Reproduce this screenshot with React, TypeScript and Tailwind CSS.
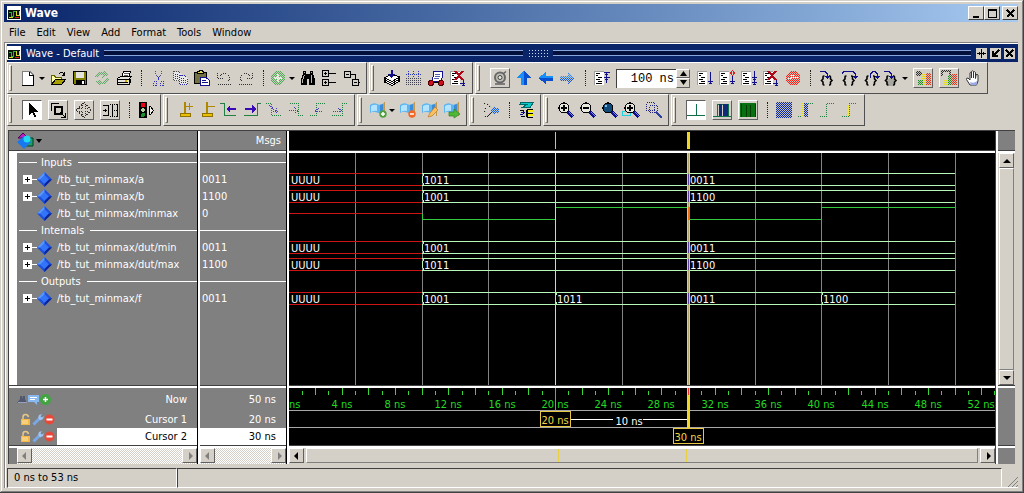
import React from "react";

/* ---------- drawing helpers ---------- */

type PathProps = { d: string; s?: string; f?: string; w?: number; dash?: string };

function P({ d, s = "none", f = "none", w = 1, dash }: PathProps) {
  return <path d={d} stroke={s} fill={f} strokeWidth={w} strokeDasharray={dash} />;
}

function Svg({ children, smooth }: { children: React.ReactNode; smooth?: boolean }) {
  return (
    <svg
      width="16"
      height="16"
      viewBox="0 0 16 16"
      shapeRendering={smooth ? "auto" : "crispEdges"}
      aria-hidden="true"
      className="shrink-0 overflow-visible"
    >
      {children}
    </svg>
  );
}

/* Checker overlay that gives an icon its disabled look. */
const Veil = () => <rect x="-1" y="-1" width="18" height="18" fill="url(#veil)" fillOpacity="0.9" />;

const K = "#000";
const N = "#10108c";

const Lines = () => (
  <>
    <P d="M0 1H10V15H0Z" f="#fff" />
    <P d="M.5 15V1.5H10" s="#a0a0a0" />
    <P d="M2 3.5H6M2 5.5H4M4 7.5H8M2 9.5H6M4 11.5H8M2 13.5H8" s={K} />
  </>
);

const Braces = () => (
  <g shapeRendering="auto">
    <P d="M5.500 6H4.800Q4 6 4 7V9L2.500 10.500L4 12V14Q4 15 4.800 15H5.500M10 6H10.700Q11.500 6 11.500 7V9L13 10.500L11.500 12V14Q11.500 15 10.700 15H10" s={K} w={1.6} />
  </g>
);

const Lens = ({ fill = "#e8e8e0" }: { fill?: string }) => (
  <>
    <circle cx="6" cy="6" r="5" fill={fill} stroke={K} strokeWidth="1.2" />
    <P d="M10 10L15 15" s="#10108c" w={3} />
    <P d="M11 10L15 14" s="#7c8ce0" />
  </>
);

const Flag = () => (
  <>
    <P d="M0 3Q4 0 7 2T14 1V10Q11 12 7 10.500T0 11Z" f="#5cb4f0" />
    <P d="M1 4Q4 2 7 3V9Q4 8 1 10Z" f="#b4e4ff" />
    <P d="M10 3L13 2V9L10 10Z" f="#3c8cd8" />
    <P d="M14.500 0V14" s="#c09850" />
  </>
);

const icons: Record<string, React.ReactNode> = {
  fresh: <Svg><P d="M2.500 1.500H10L13.500 5V15.500H2.500Z" f="#fff" s="#808080" /><P d="M9.500 1.500V5.500H13.500V15.500H2" s={K} /></Svg>,
  open: <Svg><P d="M1.500 13.500V5.500H4.500L5.500 7.500H11.500V9" f="#ffffa0" s="#606000" /><P d="M1.500 14.500L5.500 9.500H15.500L11.500 14.500Z" f="#a8a000" s={K} /><P d="M9 3.500L10.500 2.500H12.500L14.500 5M12 5.500H15M14.500 2V5" s={K} /></Svg>,
  save: <Svg><P d="M1.500 1.500H14.500V14.500H2.500L1.500 13.500Z" f="#808000" s={K} /><P d="M4 2H12V8H4Z" f="#e4e4dc" /><P d="M4 10H13V14H4Z" f={K} /><P d="M10 11H12V14H10Z" f="#fff" /></Svg>,
  reload: <Svg><P d="M1 7Q2 1 9 2L10 0L14 5L8 8L9 5Q5 4 4 8ZM15 9Q14 15 7 14L6 16L2 11L8 9L7 12Q11 12 12 8Z" f="#60ac68" /><Veil /></Svg>,
  print: <Svg><P d="M5.500 7.500L7.500 1.500H14.500L12.500 7.500Z" f="#fff" s={K} /><P d="M8 3.500H13M7.500 5.500H12" s="#606060" /><P d="M1.500 8.500L4.500 6.500H15.500L13.500 8.500V14.500H1.500Z" f="#e4e4dc" s={K} /><P d="M1 9.500H12.500M1 12.500H12" s={K} /><P d="M9 10H11V12H9Z" f="#d0b000" /><P d="M14.500 13V9" s={K} /></Svg>,
  cut: <Svg><P d="M5.500 1V4L9.500 10M11.500 1V4L7.500 10" s="#50508c" dash="1 1" /><P d="M3.500 11.500H6.500V15.500H3.500ZM10.500 11.500H13.500V15.500H10.500Z" s="#3030c0" dash="1 1" /><P d="M8.500 7V10" s="#3030c0" /></Svg>,
  copy: <Svg><P d="M1.500 1.500H6.500L9.500 4.500V10.500H1.500Z" f="#e8e8e8" s="#505050" dash="1 1" /><P d="M7.500 5.500H12.500L15.500 8.500V14.500H7.500Z" f="#e8e8e8" s="#2828b0" dash="1 1" /><P d="M3 4.500H6M3 6.500H6M3 8.500H6M9 8.500H12M9 10.500H14M9 12.500H14" s="#2828b0" dash="1 1" /></Svg>,
  paste: <Svg><P d="M.5 2.500H12.500V13.500H.5Z" f="#707040" s={K} /><P d="M3.500 3.500V1.500H5L5.500 .5H8L8.500 1.500H9.500V3.500Z" f="#e0d860" s={K} /><P d="M6.500 7.500H12L15.500 10.500V15.500H6.500Z" f="#fff" s={N} /><P d="M8 10.500H12M8 12.500H14" s={N} /></Svg>,
  undo: <Svg><P d="M1.500 3V8.500H7M2.500 7.500L6.500 3.500H10.500L13.500 6.500V9.500L10.500 12.500M2 14.500H15" s="#303030" dash="1 1" /></Svg>,
  redo: <Svg><P d="M14.500 3V8.500H9M13.500 7.500L9.500 3.500H5.500L2.500 6.500V9.500L5.500 12.500M1 14.500H14" s="#303030" dash="1 1" /></Svg>,
  add: <Svg><circle cx="8" cy="8" r="7" fill="#54ac58" /><P d="M8 4V12M4 8H12" s="#e8ffe8" w={2} /><Veil /></Svg>,
  find: <Svg><P d="M3 1H6V4H10V1H13V4L15 9V15H9V9H7V15H1V9L3 4Z" f={K} /><P d="M4.500 5L2.500 10V13M11.500 5V13M4 2.500H5M11 2.500H12" s="#b8b8b0" /></Svg>,
  expand: <Svg><P d="M.5 .5H6.500V6.500H.5ZM.5 9.500H6.500V15.500H.5ZM7 3.500H14M7 12.500H14M2 3.500H5M3.500 2V5M2 12.500H5M3.500 11V14" s={K} /></Svg>,
  collapse: <Svg><P d="M.5 1.500H6.500V7.500H.5ZM8.500 9.500H14.500V15.500H8.500ZM7 4.500H11.500V9M2 4.500H5M10 12.500H13M15 12.500H16" s={K} /></Svg>,
  compile: <Svg><P d="M.5 12L8 8L15.500 11L8 15.500Z" f="#fff" s={K} /><P d="M.5 10L8 6L15.500 9L8 13.500Z" f="#fff" s={K} /><P d="M.5 8L8 4L15.500 7L8 11.500Z" f="#fff" s={K} /><P d="M7.500 0V5" s={N} w={2} /><P d="M4 4H11L7.500 8Z" f={N} /></Svg>,
  compileAll: <Svg><P d="M2.500 1V5M7.500 1V5M12.500 1V5M0 4.500H15M1.500 6.500H4M6.500 6.500H9M11.500 6.500H14" s="#2838b8" dash="1 1" /><P d="M0 8.500H16M0 10.500H16M0 12.500H16M0 14.500H16" s="#404050" dash="1 1" /></Svg>,
  simulate: <Svg><P d="M5.500 1.500H14.500L15 4L13 11.500H3.500L5.500 5Z" f="#fff" s={N} /><P d="M7 4.500H12M7 6.500H12M6 8.500H11" s="#5060b0" /><circle cx="3" cy="13" r="2.500" fill="#d01020" stroke="#500" /><circle cx="13" cy="13" r="2.500" fill="#d01020" stroke="#500" /><P d="M5 12.500H11" s={K} /></Svg>,
  breakSim: <Svg><Lines /><P d="M5 1L13 10M13 1L5 10" s="#b00818" w={2} /><P d="M13.500 10V15M10 13.500H15M12 15.500H15" s={N} /></Svg>,
  camera: <Svg smooth><circle cx="8" cy="7.500" r="5" fill="#c0c0b8" stroke="#686868" strokeWidth="2" /><circle cx="8" cy="7.500" r="2" fill="#e8e8e0" stroke="#404040" /><P d="M3 14H13M11.500 3.500L14 1.500" s="#606060" w={1.5} /></Svg>,
  up: <Svg><P d="M8 0L15 8H11V15H5V8H1Z" f="#1890f8" /><P d="M8 0L15 8H11V15H8Z" f="#0850d0" /></Svg>,
  left: <Svg><P d="M0 8L8 2V5.500H15V11H8V14Z" f="#1890f8" /><P d="M0 8H15V11H8V14Z" f="#0850d0" /></Svg>,
  right: <Svg><P d="M15 8L8 2V5.500H0V11H8V14Z" f="#3888f0" /><P d="M15 8H0V11H8V14Z" f="#1c5cd8" /><Veil /></Svg>,
  restart: <Svg><Lines /><P d="M12.500 2V13M10 2.500H15.500M10 7.500H15.500M11 4.500H14M11 9.500H14" s={N} /></Svg>,
  run: <Svg><Lines /><P d="M13.500 2V14M11 11.500H16M12 13.500H15" s={N} /></Svg>,
  runContinue: <Svg><Lines /><P d="M13.500 6V14M11 11.500H16M12 13.500H15" s={N} /><P d="M13.500 .5L15.500 3L13.500 5.500L11.500 3Z" s="#e02020" /></Svg>,
  runAll: <Svg><Lines /><P d="M13.500 1V14M11 7.500H16M12 9.500H15M11 12.500H16M12 14.500H15" s={N} /></Svg>,
  stop: <Svg><P d="M5 1H11L15 5V11L11 15H5L1 11V5Z" f="#ff2018" /><P d="M3 8.500H6V5.500H8V9M10 6V9M10 7.500H13" s="#fff" /><Veil /></Svg>,
  stepInto: <Svg><Braces /><P d="M1 1.500H6L8.500 4V9M6 6.500H11M7 7.500H10M8 8.500H9" s={N} /></Svg>,
  stepOver: <Svg><Braces /><P d="M1 3.500L3 1.500H12L14.500 4V8M12 6.500H17M13 7.500H16M14 8.500H15" s={N} /></Svg>,
  stepOut: <Svg><Braces /><P d="M7.500 8V4L10 1.500H12L14.500 4V8M12 6.500H17M13 7.500H16M14 8.500H15" s={N} /></Svg>,
  stepMore: <Svg><circle cx="8" cy="12" r="4" fill="#a8a8a0" /><Braces /><P d="M1 1.500H6L8.500 4V9M6 6.500H11M7 7.500H10M8 8.500H9" s={N} /></Svg>,
  profile: <Svg><P d="M6 4H11V15H6Z" f="#e8e010" /><P d="M11 3H16V15H11Z" f="#e03820" /><P d="M3 10H8V15H3Z" f="#208c20" /><circle cx="4" cy="3.500" r="3" fill="#303030" /><Veil /></Svg>,
  memory: <Svg><P d="M7 5H11V15H7Z" f="#208c20" /><P d="M11 4H16V15H11Z" f="#e03820" /><P d="M3 10H7V15H3Z" f="#e8e010" /><P d="M1 6V1H9V5" s="#303030" w={2} /><Veil /></Svg>,
  hand: <Svg smooth><P d="M5 15L1.500 9.500Q1 8 3 8L5 10V3Q5.500 1.500 6.500 3V8V1.500Q7.500 0 8.500 1.500V8V2Q9.500 1 10.500 2.500V8.500L11 5Q12 3.500 13 5L13 11L11.500 15Z" f="#fff" s="#333" /><P d="M6 15L5 12Q9 14 12 11L11.500 15Z" f="#98a8e8" /></Svg>,

  pointer: <Svg><P d="M5 1V13L8 10.500L10.500 15H12.500L10 10H14Z" f={K} /></Svg>,
  zoomMode: <Svg><P d="M1.500 9V1.500H9" s={K} /><P d="M5 5H12V12H5Z" s={K} w={2} /><P d="M10 10L15 15M15.500 11V15.500H11" s={K} /></Svg>,
  panMode: <Svg><P d="M8 .5L11 3.500H9.500V6.500H12.500V5L15.500 8L12.500 11V9.500H9.500V12.500H11L8 15.500L5 12.500H6.500V9.500H3.500V11L.5 8L3.500 5V6.500H6.500V3.500H5Z" s="#303030" dash="1 1" /></Svg>,
  editMode: <Svg><P d="M1 3.500H6.500V13.500M1 8.500H5M1 13.500H6M3 7V10M10.500 2V15M15.500 2V15" s={K} /><P d="M8 2.500H16M8 14.500H16M10 8.500H15" s={K} dash="1 1" /></Svg>,
  traffic: <Svg><P d="M1 0H9V16H1Z" f={K} /><circle cx="5" cy="3" r="2.300" fill="#f00010" /><circle cx="5" cy="8" r="1.800" fill="#b0d0a0" /><circle cx="5" cy="13" r="2" fill="#189030" /><P d="M11.500 5V12L12.500 12.500L15.500 8.500L12.500 4.500Z" f="#f4f4ec" s={K} /></Svg>,
  insertCursor: <Svg><P d="M7 0V11" s="#b08800" w={2} /><P d="M8 4.500H15M11.500 1V8" s="#b08800" /><P d="M2.500 11.500H12.500V14.500H2.500Z" f="#e8c000" s="#907000" /></Svg>,
  deleteCursor: <Svg><P d="M7 0V11" s="#b08800" w={2} /><P d="M8 4.500H15" s="#b08800" /><P d="M2.500 11.500H12.500V14.500H2.500Z" f="#e8c000" s="#907000" /></Svg>,
  prevEdge: <Svg><P d="M-2 1.500H2.500V13.500H14" s="#208040" /><P d="M5 7H14" s="#3808b8" w={2} /><P d="M4 7L8 3V11Z" f="#3808b8" /></Svg>,
  nextEdge: <Svg><P d="M0 13.500H13.500V1.500H17" s="#208040" /><P d="M1 7H9" s="#3808b8" w={2} /><P d="M12 7L8 3V11Z" f="#3808b8" /></Svg>,
  edgeA: <Svg><P d="M0 1.500H5.500V13.500H15" s="#208040" dash="1 1" /><P d="M3 3L12 11M7 9.500H12M10 6V11" s="#4040c0" dash="1 1" /></Svg>,
  edgeB: <Svg><P d="M2 1.500H10.500V13.500H16" s="#208040" dash="1 1" /><P d="M1 8.500H9M6 5L10 9L6 12" s="#4040c0" dash="1 1" /></Svg>,
  edgeC: <Svg><P d="M0 13.500H6.500V1.500H15" s="#208040" dash="1 1" /><P d="M5 9.500H12M9 6L5 9L9 12" s="#4040c0" dash="1 1" /></Svg>,
  edgeD: <Svg><P d="M0 13.500H10.500V1.500H16" s="#208040" dash="1 1" /><P d="M1 9.500H9M6 6L10 9L6 12" s="#4040c0" dash="1 1" /></Svg>,
  flagAdd: <Svg smooth><Flag /><circle cx="13" cy="12" r="3.700" fill="#50a040" /><P d="M13 10V14M11 12H15" s="#fff" w={1.5} /></Svg>,
  flagDel: <Svg smooth><Flag /><circle cx="12" cy="12" r="3.700" fill="#f06828" /><P d="M10 12H14" s="#fff" w={1.5} /></Svg>,
  flagEdit: <Svg smooth><Flag /><P d="M6 15L8 11L13 5L16 8L10 14Z" f="#f8c060" s="#c07820" w={0.7} /></Svg>,
  flagGo: <Svg smooth><Flag /><P d="M5 10H10V7L16 12L10 16V14H5Z" f="#50b838" s="#308020" w={0.7} /></Svg>,
  radix: <Svg><P d="M0 1.500H3L7.500 6M0 6.500H3M0 9.500H3M0 14.500H3L7.500 10" s="#202020" dash="2 1" /><P d="M15 6V11H11V13L6 8.500L11 4V6Z" f="#1060f0" /><Veil /></Svg>,
  palette: <Svg><P d="M1.500 2.500L3 .5H15.500L12 5.500H4L9 2.500Z" f="#10c8c8" s="#006868" /><P d="M10 8H15V10H10ZM10 12H15V14H10Z" f="#f8f000" /><P d="M1.500 8.500H5V12M8 8V15M3 14.500H7M9.500 7V15.500H15M9.500 11.500H15M10 7.500H15" s={K} /><P d="M3 10.500H7M2 12.500H5" s={N} /></Svg>,
  zoomIn: <Svg><Lens /><P d="M3 6H9M6 3V9" s={K} w={2} /></Svg>,
  zoomOut: <Svg><Lens /><P d="M3 6H9" s={K} w={2} /></Svg>,
  zoomFull: <Svg><Lens fill="#104878" /><P d="M3 3H5V5H3Z" f="#7cc0e8" /></Svg>,
  zoomCursor: <Svg><P d="M-1.500 9.500H6.500V13.500H-1.500Z" s="#20d0e0" /><Lens /><P d="M3 6H9M6 3V9" s={K} w={2} /></Svg>,
  zoomOther: <Svg><P d="M.5 .5H8.500V8.500H.5ZM3.500 3.500H11.500V10.500H3.500Z" s="#202080" dash="1 1" /><P d="M10 10L16 16" s="#3040a0" w={2} /></Svg>,
  waveLine: <Svg><P d="M-1 13.500H17M8.500 2V14" s="#107048" /></Svg>,
  waveBlock: <Svg><P d="M-1 14.500H17M3.500 14V2.500H14.500V14" s="#107048" /><P d="M5 2H8V14H5ZM9 2H14V14H9Z" f="#102c78" /></Svg>,
  waveGreen: <Svg><P d="M0 1H16V15H0Z" f="#087010" /><P d="M1.500 15V2M6.500 3V15M10.500 3V15M15.500 2V15" s="#003c00" /></Svg>,
  grayBlock: <Svg><P d="M0 0H16V16H0Z" f="#1028a0" /><Veil /></Svg>,
  stepBlock: <Svg><P d="M5 1H10V15H5Z" f="#1028b0" /><P d="M5 1V15" s="#f0e800" w={2} /><Veil /><P d="M0 14.500H4M10 1.500H15" s="#208040" dash="1 1" /></Svg>,
  stepGreen: <Svg><P d="M0 14.500H6.500V1.500H15" s="#208040" dash="1 1" /></Svg>,
  stepYellow: <Svg><P d="M6.500 3V14" s="#f0e838" /><P d="M0 14.500H7.500V1.500H15" s="#208040" dash="1 1" /></Svg>,
};

/* ---------- toolbar pieces ---------- */

const raised = "border border-t-white border-l-white border-r-[#606060] border-b-[#606060]";

function Tool({ icon, label }: { icon: string; label: string }) {
  return (
    <button aria-label={label} className="flex h-5 w-[22px] shrink-0 items-center justify-center">
      {icons[icon]}
    </button>
  );
}

function Boxed({ icon, label, pressed }: { icon: string; label: string; pressed?: boolean }) {
  return (
    <button
      aria-label={label}
      aria-pressed={!!pressed}
      className={
        pressed
          ? "mx-[3px] flex h-5 w-5 shrink-0 items-center justify-center border border-t-[#606060] border-l-[#606060] border-r-white border-b-white bg-white"
          : "mx-[3px] flex h-5 w-5 shrink-0 items-center justify-center border border-t-white border-l-white border-r-[#606060] border-b-[#606060]"
      }
    >
      {icons[icon]}
    </button>
  );
}

function Split({ icon, label }: { icon: string; label: string }) {
  return (
    <>
      <button aria-label={label} className="flex h-5 w-[18px] shrink-0 items-center justify-center">
        {icons[icon]}
      </button>
      <button aria-label={label + " options"} className="flex h-5 w-[10px] shrink-0 items-center justify-center">
        <svg width="6" height="3" aria-hidden="true"><path d="M0 0H6L3 3Z" /></svg>
      </button>
    </>
  );
}

const Sep = () => (
  <span className="flex h-5 w-3 shrink-0 justify-center">
    <span className="h-4 self-center border-l border-dotted border-[#202020]" />
  </span>
);

function Group({ children, label }: { children: React.ReactNode; label: string }) {
  return (
    <div
      role="toolbar"
      aria-label={label}
      className="flex h-8 shrink-0 items-center border border-t-white border-l-white border-r-[#505050] border-b-[#505050] pr-[3px]"
    >
      <span className="mr-[7px] ml-px h-[26px] w-[3px] border border-t-white border-l-white border-r-[#606060] border-b-[#808080]" />
      {children}
    </div>
  );
}

/* ---------- window pieces ---------- */

const WaveLogo = () => (
  <svg width="14" height="14" viewBox="0 0 14 14" shapeRendering="crispEdges" aria-hidden="true" className="shrink-0">
    <P d="M0 0H14V14H0Z" f="#fff" />
    <P d="M1 4H13V13H1Z" f="#081408" />
    <P d="M2 6.500H4.500V10.500H6.500V5.500H9" s="#20b838" />
    <P d="M2 11.500H6M9.500 5V9.500H12.500V5" s="#d8d820" />
    <P d="M8 11.500H12" s="#e02020" />
  </svg>
);

function CaptionButton({ label, d, w = 1, small }: { label: string; d: string; w?: number; small?: boolean }) {
  return (
    <button
      aria-label={label}
      className={
        small
          ? "flex h-[11px] w-[11px] items-center justify-center bg-[#d4d0c8]"
          : "flex h-[14px] w-4 items-center justify-center border border-t-white border-l-white border-r-[#404040] border-b-[#404040] bg-[#d4d0c8]"
      }
    >
      <svg width="9" height="9" viewBox="0 0 9 9" shapeRendering="crispEdges" aria-hidden="true">
        <P d={d} s={K} w={w} />
      </svg>
    </button>
  );
}

const Diamond = () => (
  <svg width="15" height="15" viewBox="0 0 15 15" aria-hidden="true" className="shrink-0">
    <path d="M7.500 0L15 7.500L7.500 15L0 7.500Z" fill="#1c50dc" />
    <path d="M7.500 0V7.500H0Z" fill="#5c98f8" />
    <path d="M7.500 3L12 7.500L7.500 12L3 7.500Z" fill="#3474f8" />
    <path d="M15 7.500L7.500 15V12L12 7.500Z" fill="#0c2498" />
  </svg>
);

type Row = { name: string; value?: string; kind: "divider" | "bus" | "bit"; changes?: [number, string][] };

const rows: Row[] = [
  { name: "Inputs", kind: "divider" },
  { name: "/tb_tut_minmax/a", value: "0011", kind: "bus", changes: [[0, "UUUU"], [10, "1011"], [30, "0011"]] },
  { name: "/tb_tut_minmax/b", value: "1100", kind: "bus", changes: [[0, "UUUU"], [10, "1001"], [30, "1100"]] },
  { name: "/tb_tut_minmax/minmax", value: "0", kind: "bit", changes: [[0, "U"], [10, "0"], [20, "1"], [30, "0"], [40, "1"]] },
  { name: "Internals", kind: "divider" },
  { name: "/tb_tut_minmax/dut/min", value: "0011", kind: "bus", changes: [[0, "UUUU"], [10, "1001"], [30, "0011"]] },
  { name: "/tb_tut_minmax/dut/max", value: "1100", kind: "bus", changes: [[0, "UUUU"], [10, "1011"], [30, "1100"]] },
  { name: "Outputs", kind: "divider" },
  { name: "/tb_tut_minmax/f", value: "0011", kind: "bus", changes: [[0, "UUUU"], [10, "1001"], [20, "1011"], [30, "0011"], [40, "1100"]] },
];

const ROW = 17;
const END = 50;
const at = (ns: number) => Math.floor(ns * 13.32);

function Waves() {
  return (
    <svg width="100%" height="100%" shapeRendering="crispEdges" role="img" aria-label="Waveforms">
      {[5, 10, 15, 20, 25, 30, 35, 40, 45, 50].map((t) => (
        <line key={t} x1={at(t) + 0.5} x2={at(t) + 0.5} y1="0" y2="100%" stroke="#848484" />
      ))}
      {rows.map((row, i) => {
        const top = i * ROW;
        const list = row.changes ?? [];
        if (row.kind === "bit") {
          const level = (v: string) => top + (v === "U" ? 9.5 : v === "1" ? 3.5 : 15.5);
          return (
            <g key={row.name} fill="none">
              {list.map(([t, v], n) => {
                const x = at(t);
                const end = at(list[n + 1]?.[0] ?? END);
                const prev = n > 0 ? level(list[n - 1][1]) : level(v);
                const color = v === "U" ? "#d01414" : "#34c83c";
                return (
                  <g key={t} stroke={color}>
                    <path d={`M${x} ${level(v)}H${end}`} />
                    {n > 0 && <path d={`M${x + 0.5} ${prev}V${level(v)}`} />}
                  </g>
                );
              })}
            </g>
          );
        }
        return (
          <g key={row.name} fill="none">
            {list.map(([t, v], n) => {
              const x = at(t);
              const end = at(list[n + 1]?.[0] ?? END);
              const color = v === "UUUU" ? "#d01414" : "#b8f8b8";
              return (
                <g key={t}>
                  <path d={`M${x} ${top + 3.5}H${end}M${x} ${top + 15.5}H${end}`} stroke={color} />
                  {n > 0 && (
                    <path
                      d={`M${x + 1.5} ${top + 3}V${top + 6}M${x + 0.5} ${top + 6}V${top + 13}M${x + 1.5} ${top + 13}V${top + 16}`}
                      stroke="#b8f8b8"
                    />
                  )}
                  <text x={x + 2} y={top + 14} fill="#fff" fontSize="11">{v}</text>
                </g>
              );
            })}
          </g>
        );
      })}
      <rect x={at(20)} width="1" height="100%" fill="#f0dc50" />
      <rect x={at(30) - 1} width="3" height="100%" fill="#f0d820" />
      <rect x={at(30)} width="1" height="100%" fill="#b0a468" />
      {rows.map((row, i) =>
        row.kind === "bus" ? (
          <rect key={row.name} x={at(30)} y={i * ROW + 4} width="1" height="11" fill="#6040a0" />
        ) : row.kind === "bit" ? (
          <rect key={row.name} x={at(30)} y={i * ROW + 3} width="2" height="13" fill="#f07010" />
        ) : null,
      )}
    </svg>
  );
}

function Timeline() {
  const ticks = Array.from({ length: 53 }, (_, i) => i + 1);
  const labels = Array.from({ length: 13 }, (_, i) => (i + 1) * 4);
  return (
    <svg width="100%" height="56" shapeRendering="crispEdges" role="img" aria-label="Timeline">
      {ticks.map((t) => (
        <line key={t} x1={at(t) + 0.5} x2={at(t) + 0.5} y1={t % 2 ? 3 : 0} y2="7" stroke="#38d838" />
      ))}
      <text x="0" y="20" fontSize="11" fill="#20dc20">ns</text>
      {labels.map((t) => (
        <text key={t} x={at(t)} y="20" fontSize="11" textAnchor="middle" fill="#20dc20">{t} ns</text>
      ))}
      <line x1="0" x2="100%" y1="22.5" y2="22.5" stroke="#a8a8a8" />
      <line x1="0" x2="100%" y1="39.5" y2="39.5" stroke="#a8a8a8" />
      <rect x={at(20)} y="0" width="1" height="22" fill="#f07020" />
      <rect x={at(30) - 1} y="0" width="3" height="40" fill="#f0d820" />
      <rect x={at(30)} y="0" width="1" height="7" fill="#f03020" />
      <path d={`M${at(20) + 15} 31.5H${at(24) + 5}M${at(26) + 8} 31.5H${at(30) - 1}`} stroke="#fff" />
      <text x={at(25) + 7} y="37" fontSize="11" textAnchor="middle" fill="#fff">10 ns</text>
      <rect x={at(20) - 14.5} y="23.5" width="30" height="15" fill="#000" stroke="#e8c840" />
      <text x={at(20)} y="36" fontSize="11" textAnchor="middle" fill="#f0d840">20 ns</text>
      <rect x={at(30) - 14.5} y="40.5" width="30" height="15" fill="#000" stroke="#e8c840" />
      <text x={at(30)} y="53" fontSize="11" textAnchor="middle" fill="#f0d840">30 ns</text>
    </svg>
  );
}

function Arrow({ dir, dim }: { dir: "left" | "right" | "up" | "down"; dim?: boolean }) {
  const d = { left: "M5 0V8L1 4Z", right: "M3 0V8L7 4Z", up: "M0 6H8L4 2Z", down: "M0 2H8L4 6Z" }[dir];
  return (
    <button aria-label={"Scroll " + dir} className={"flex h-[15px] w-[15px] shrink-0 items-center justify-center bg-[#d4d0c8] " + raised}>
      <svg width="8" height="8" aria-hidden="true"><path d={d} fill={dim ? "#808080" : "#000"} /></svg>
    </button>
  );
}

function DimScroll() {
  return (
    <div className="flex h-4 justify-between bg-[repeating-conic-gradient(#fff_0_25%,#d4d0c8_0_50%)] bg-[length:2px_2px]">
      <Arrow dir="left" dim />
      <Arrow dir="right" dim />
    </div>
  );
}

const Ridge = () => <div className="h-[3px] shrink-0 border-t border-[#404040] bg-white" />;

const Minus = () => (
  <svg width="11" height="11" viewBox="0 0 11 11" aria-hidden="true"><circle cx="5.500" cy="5.500" r="5" fill="#e84838" /><path d="M2.500 5.500H8.500" stroke="#fff" strokeWidth="2" /></svg>
);
const Plus = () => (
  <svg width="11" height="11" viewBox="0 0 11 11" aria-hidden="true"><circle cx="5.500" cy="5.500" r="5.500" fill="#40a440" /><path d="M3 5.500H8M5.500 3V8" stroke="#fff" strokeWidth="1.500" /></svg>
);
const Lock = () => (
  <svg width="12" height="13" viewBox="0 0 12 13" aria-hidden="true"><path d="M3 7V4Q3 1.500 5.500 1.500T8.500 4" stroke="#e8c888" strokeWidth="1.500" fill="none" /><path d="M1 6H10V12H1Z" fill="#f4b848" /><path d="M2 8H8M2 10H8" stroke="#fce8b0" /></svg>
);
const Wrench = () => (
  <svg width="12" height="13" viewBox="0 0 12 13" aria-hidden="true"><path d="M1.500 11.500L7 6" stroke="#78a8e8" strokeWidth="3" /><path d="M6 5L7 2L10 1L8.500 3.500L10 4.500L12 3L11 6L8 7.500Z" fill="#9cc4f4" /></svg>
);
const Users = () => (
  <svg width="11" height="11" viewBox="0 0 11 11" aria-hidden="true"><path d="M0 9L3 5V2H5V5L6 2H8V5L10 9Z" fill="#505870" /><path d="M1 8.500H10" stroke="#98a0b8" /></svg>
);
const Note = () => (
  <svg width="12" height="11" viewBox="0 0 12 11" aria-hidden="true"><path d="M0 1H11V8H9V11L6 8H0Z" fill="#88b8f0" /><path d="M2 3.500H9M2 5.500H7" stroke="#fff" /></svg>
);

const cursors = [
  { name: "Cursor 1", time: "20 ns", active: false },
  { name: "Cursor 2", time: "30 ns", active: true },
];

export default function App() {
  return (
    <div className="flex min-h-screen flex-col overflow-hidden bg-[#d4d0c8] pt-1 pr-1.5 pb-[5px] pl-1 font-['DejaVu_Sans_Condensed','DejaVu_Sans',sans-serif] text-[11px] leading-[17px] text-black shadow-[inset_-1px_-1px_#404040,inset_1px_1px_#d4d0c8,inset_-2px_-2px_#808080,inset_2px_2px_#fff]">
      <svg width="0" height="0" className="absolute" aria-hidden="true">
        <defs>
          <pattern id="veil" width="2" height="2" patternUnits="userSpaceOnUse">
            <rect width="1" height="1" fill="#d4d0c8" />
            <rect x="1" y="1" width="1" height="1" fill="#d4d0c8" />
          </pattern>
        </defs>
      </svg>

      <header className="flex h-[18px] shrink-0 items-center gap-1 bg-linear-to-r from-[#0a246a] to-[#a6caf0] pl-[3px] text-white">
        <WaveLogo />
        <h1 className="flex-1 text-xs font-bold">Wave</h1>
        <div className="flex">
          <CaptionButton label="Minimize" d="M1 8H7" w={2} />
          <CaptionButton label="Maximize" d="M.5 .5H8.500V8.500H.5ZM0 1.500H9" />
          <span className="w-[2px]" />
          <CaptionButton label="Close" d="M1 1L8 8M8 1L1 8" w={2} />
        </div>
      </header>

      <nav className="flex h-5 shrink-0 items-center gap-[11px] pl-[5px]" aria-label="Menu">
        {["File", "Edit", "View", "Add", "Format", "Tools", "Window"].map((m) => (
          <button key={m}>{m}</button>
        ))}
      </nav>

      <section className="flex flex-1 flex-col border-t border-l border-[#808080]">
        <div className="flex flex-1 flex-col border-t border-l border-white pl-px">
          <div className="flex h-[18px] shrink-0 items-center gap-[5px] bg-[#0a246a] pr-[3px] text-white">
            <WaveLogo />
            <h2>Wave - Default</h2>
            <span className="h-[6px] flex-1 border-y border-[#88a4dc] bg-[#04103c]" />
            <span className="h-2 w-5 bg-[radial-gradient(#c8d8f8_30%,#0a246a_45%)] bg-[length:3px_3px]" />
            <span className="h-[6px] flex-1 border-y border-[#88a4dc] bg-[#04103c]" />
            <div className="flex gap-[3px]">
              <CaptionButton small label="Pin" d="M4.500 0V9M0 4.500H9M2.500 3V6M6.500 3V6" />
              <CaptionButton small label="Undock" d="M8 1L3 6M2 2V7H7" w={2} />
              <CaptionButton small label="Close pane" d="M1 1L8 8M8 1L1 8" w={2} />
            </div>
          </div>

          <div className="flex shrink-0 flex-col">
            <div className="flex gap-[2px]">
              <Group label="Standard">
                <Split icon="fresh" label="New" />
                <Tool icon="open" label="Open" />
                <Tool icon="save" label="Save" />
                <Tool icon="reload" label="Reload" />
                <Tool icon="print" label="Print" />
                <Sep />
                <Tool icon="cut" label="Cut" />
                <Tool icon="copy" label="Copy" />
                <Tool icon="paste" label="Paste" />
                <Tool icon="undo" label="Undo" />
                <Tool icon="redo" label="Redo" />
                <Sep />
                <Split icon="add" label="Add" />
                <Tool icon="find" label="Find" />
                <Tool icon="expand" label="Expand" />
                <Tool icon="collapse" label="Collapse" />
              </Group>
              <Group label="Compile">
                <Tool icon="compile" label="Compile" />
                <Tool icon="compileAll" label="Compile all" />
                <Tool icon="simulate" label="Simulate" />
                <Tool icon="breakSim" label="Break" />
              </Group>
              <Group label="Simulate">
                <Boxed icon="camera" label="Snapshot" />
                <Tool icon="up" label="Up" />
                <Tool icon="left" label="Back" />
                <Tool icon="right" label="Forward" />
                <Sep />
                <Tool icon="restart" label="Restart" />
                <div className="mr-1 ml-[3px] flex h-[19px] shrink-0">
                  <input
                    aria-label="Run length"
                    defaultValue="100 ns"
                    className="h-[19px] w-[60px] border-t border-l border-[#404040] bg-white px-[2px] text-right font-['Liberation_Mono',monospace] text-xs"
                  />
                  <div className="flex w-[14px] flex-col">
                    <button aria-label="Longer" className={"flex flex-1 items-center justify-center " + raised}>
                      <svg width="7" height="5" aria-hidden="true"><path d="M0 5H7L3.500 0Z" /></svg>
                    </button>
                    <button aria-label="Shorter" className={"flex flex-1 items-center justify-center " + raised}>
                      <svg width="7" height="5" aria-hidden="true"><path d="M0 0H7L3.500 5Z" /></svg>
                    </button>
                  </div>
                </div>
                <Tool icon="run" label="Run" />
                <Tool icon="runContinue" label="Continue" />
                <Tool icon="runAll" label="Run all" />
                <Tool icon="breakSim" label="Break run" />
                <Tool icon="stop" label="Stop" />
                <Sep />
                <Tool icon="stepInto" label="Step into" />
                <Tool icon="stepOver" label="Step over" />
                <Tool icon="stepOut" label="Step out" />
                <Split icon="stepMore" label="Step current" />
                <Boxed icon="profile" label="Performance profiling" />
                <Boxed icon="memory" label="Memory profiling" />
                <Tool icon="hand" label="Edit breakpoints" />
              </Group>
            </div>
            <div className="flex gap-[2px]">
              <Group label="Mouse mode">
                <Boxed icon="pointer" label="Select mode" pressed />
                <Boxed icon="zoomMode" label="Zoom mode" />
                <Boxed icon="panMode" label="Pan mode" />
                <Boxed icon="editMode" label="Edit mode" />
                <Sep />
                <Tool icon="traffic" label="Stop drawing" />
              </Group>
              <Group label="Wave cursor">
                <Tool icon="insertCursor" label="Insert cursor" />
                <Tool icon="deleteCursor" label="Delete cursor" />
                <Tool icon="prevEdge" label="Previous transition" />
                <Tool icon="nextEdge" label="Next transition" />
                <Tool icon="edgeA" label="Previous falling edge" />
                <Tool icon="edgeB" label="Next falling edge" />
                <Tool icon="edgeC" label="Previous rising edge" />
                <Tool icon="edgeD" label="Next rising edge" />
              </Group>
              <Group label="Bookmarks">
                <Split icon="flagAdd" label="Add bookmark" />
                <Tool icon="flagDel" label="Delete bookmark" />
                <Tool icon="flagEdit" label="Edit bookmark" />
                <Tool icon="flagGo" label="Go to bookmark" />
              </Group>
              <Group label="Compare">
                <Tool icon="radix" label="Combine signals" />
                <Sep />
                <Tool icon="palette" label="Update" />
              </Group>
              <Group label="Zoom">
                <Tool icon="zoomIn" label="Zoom in" />
                <Tool icon="zoomOut" label="Zoom out" />
                <Tool icon="zoomFull" label="Zoom full" />
                <Tool icon="zoomCursor" label="Zoom in on cursor" />
                <Tool icon="zoomOther" label="Zoom other window" />
              </Group>
              <Group label="Expanded time">
                <Boxed icon="waveLine" label="Expanded time off" pressed />
                <Boxed icon="waveBlock" label="Expanded time deltas" />
                <Boxed icon="waveGreen" label="Expanded time events" />
                <Sep />
                <Tool icon="grayBlock" label="Expand all time" />
                <Tool icon="stepBlock" label="Expand time at cursor" />
                <Tool icon="stepGreen" label="Collapse all time" />
                <Tool icon="stepYellow" label="Collapse time at cursor" />
              </Group>
            </div>
          </div>

          <main className="mt-1 mr-[3px] ml-px flex flex-1 border-t border-l border-[#404040] bg-white">
            {/* signal names */}
            <div className="flex w-[189px] shrink-0 flex-col border-r border-black bg-[#808080] text-white">
              <div className="flex h-[19px] shrink-0 items-center">
                <button aria-label="Column options" className="ml-2 flex items-center gap-[2px]">
                  <svg width="17" height="16" viewBox="0 0 17 16" aria-hidden="true">
                    <path d="M1 5L6 0L11 5Z" fill="#c020c0" stroke="#500060" />
                    <path d="M10 5H16V13H8Z" fill="#20a060" stroke="#004020" />
                    <path d="M7 3L14 9L7 16L0 9Z" fill="#1878f0" />
                    <circle cx="10" cy="6" r="3.500" fill="#20d8f0" />
                  </svg>
                  <svg width="6" height="4" aria-hidden="true"><path d="M0 0H6L3 4Z" /></svg>
                </button>
              </div>
              <Ridge />
              <div className="flex-1 border-l-8 border-white pt-px">
                {rows.map((row) =>
                  row.kind === "divider" ? (
                    <div key={row.name} className="flex h-[17px] items-center pl-[2px]">
                      <span className="mr-1 h-px w-[18px] bg-white" />
                      {row.name}
                      <span className="ml-1.5 h-px flex-1 bg-white" />
                    </div>
                  ) : (
                    <div key={row.name} className="flex h-[17px] items-center pl-[6px]">
                      {row.kind === "bus" ? (
                        <>
                          <button aria-label={"Expand " + row.name} className="h-[9px] w-[9px] bg-white">
                            <svg width="9" height="9" className="block" aria-hidden="true"><path d="M2 4.500H7M4.500 2V7" stroke="#000" /></svg>
                          </button>
                          <span className="h-px w-[5px] bg-white" />
                        </>
                      ) : (
                        <span className="w-[14px]" />
                      )}
                      <Diamond />
                      <span className="ml-[5px]">{row.name}</span>
                    </div>
                  ),
                )}
              </div>
              <Ridge />
              <div className="h-[57px] shrink-0 text-right">
                <div className="flex h-[23px] items-center pr-[10px] pl-2">
                  <Users /><Note /><Plus />
                  <span className="flex-1">Now</span>
                </div>
                {cursors.map((c) => (
                  <div key={c.name} className="flex h-[17px] items-center pl-[11px]">
                    <Lock /><Wrench /><Minus />
                    <span className={c.active ? "ml-[2px] flex-1 bg-white pr-[10px] text-black" : "ml-[2px] flex-1 pr-[10px]"}>{c.name}</span>
                  </div>
                ))}
              </div>
              <Ridge />
              <div className="pl-2"><DimScroll /></div>
            </div>

            {/* values */}
            <div className="ml-[2px] flex w-[87px] shrink-0 flex-col border-r border-black bg-[#808080] text-white">
              <div className="flex h-[19px] shrink-0 items-center justify-end pr-[5px]">Msgs</div>
              <Ridge />
              <div className="flex-1 pt-px">
                {rows.map((row) => (
                  <div key={row.name} className="flex h-[17px] items-center pl-[2px]">
                    {row.kind === "divider" ? <span className="-ml-[2px] h-px flex-1 bg-white" /> : row.value}
                  </div>
                ))}
              </div>
              <Ridge />
              <div className="h-[57px] shrink-0 text-right">
                <div className="flex h-[23px] items-center justify-end pr-[10px]">50 ns</div>
                {cursors.map((c) => (
                  <div key={c.name} className={c.active ? "h-[17px] bg-white pr-[10px] text-black" : "h-[17px] pr-[10px]"}>{c.time}</div>
                ))}
              </div>
              <Ridge />
              <DimScroll />
            </div>

            {/* waves */}
            <div className="ml-[2px] flex min-w-0 flex-1 flex-col border-r border-[#404040] bg-black">
              <div className="h-[19px] shrink-0 pt-px">
                <svg width="100%" height="17" shapeRendering="crispEdges" className="block" aria-hidden="true">
                  <rect x={at(20)} width="1" height="17" fill="#f0c040" />
                  <rect x={at(30) - 1} width="3" height="17" fill="#f0d820" />
                </svg>
              </div>
              <Ridge />
              <div className="relative flex-1"><div className="absolute inset-0"><Waves /></div></div>
              <Ridge />
              <div className="h-[57px] shrink-0"><Timeline /></div>
              <Ridge />
              <div className="flex h-4 gap-[2px] bg-[#d4d0c8]">
                <Arrow dir="left" />
                <div className="h-[15px] flex-1 border border-t-white border-l-white border-r-[#808080] border-b-[#808080]">
                  <svg width="100%" height="13" shapeRendering="crispEdges" className="block" aria-hidden="true">
                    <rect x="37.500%" width="1" height="13" fill="#e8d040" />
                    <rect x="56.500%" width="1" height="13" fill="#e8d040" />
                  </svg>
                </div>
                <Arrow dir="right" />
              </div>
            </div>

            {/* vertical scroll */}
            <div className="ml-[2px] flex w-[17px] shrink-0 flex-col bg-[#808080]">
              <div className="h-[19px] shrink-0" />
              <Ridge />
              <div className="flex flex-1 flex-col bg-[#d4d0c8] pl-px">
                <Arrow dir="up" />
                <div className="w-[15px] flex-1 border border-t-white border-l-white border-r-[#808080] border-b-[#808080]" />
                <Arrow dir="down" />
              </div>
              <Ridge />
              <div className="h-[57px] shrink-0" />
              <Ridge />
              <div className="h-4" />
            </div>
          </main>

          <footer className="mt-1 flex h-5 shrink-0 items-stretch">
            <span className="w-[170px] border border-t-[#404040] border-l-[#404040] border-r-white border-b-white pl-1.5">0 ns to 53 ns</span>
            <span className="flex-1 border border-t-[#404040] border-l-[#404040] border-r-white border-b-white" />
            <span className="flex w-4 items-end justify-end border-b border-white">
              <svg width="12" height="12" aria-hidden="true"><path d="M2 12L12 2M6 12L12 6M10 12L12 10" stroke="#808080" /></svg>
            </span>
          </footer>
        </div>
      </section>
    </div>
  );
}
